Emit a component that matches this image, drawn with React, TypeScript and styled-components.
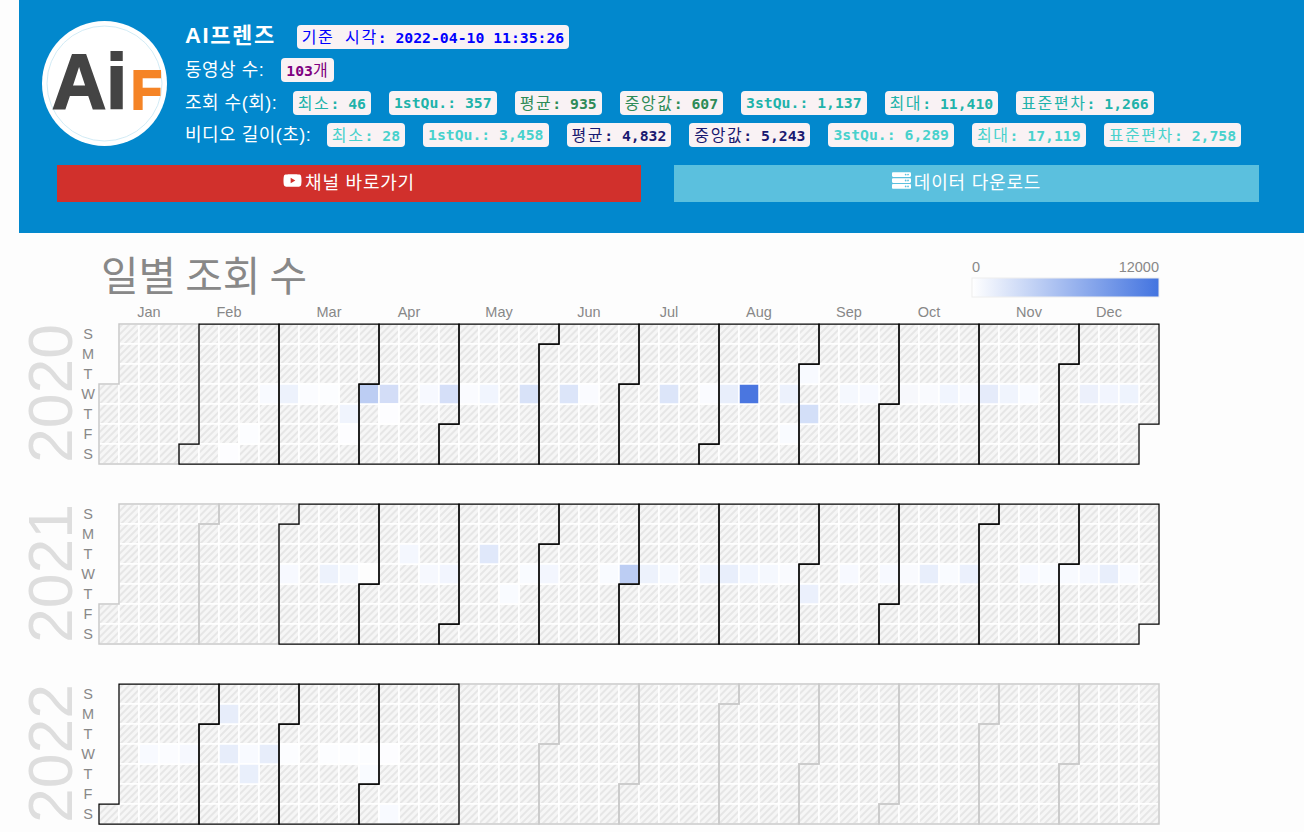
import React from 'react'
import styled, { createGlobalStyle } from 'styled-components'
import { FaYoutube, FaServer } from 'react-icons/fa'

const CELL = 20
const LEFT = 99
const YEAR_TOPS: Record<number, number> = { 2020: 324, 2021: 504, 2022: 684 }
const DAY_LABELS = ['S', 'M', 'T', 'W', 'T', 'F', 'S']
const MONTH_LABELS: [string, number][] = [
  ['Jan', 149],
  ['Feb', 229],
  ['Mar', 329],
  ['Apr', 409],
  ['May', 499],
  ['Jun', 589],
  ['Jul', 669],
  ['Aug', 759],
  ['Sep', 849],
  ['Oct', 929],
  ['Nov', 1029],
  ['Dec', 1109],
]

// months that have data get the black outline
const ACTIVE_MONTHS: Record<number, number[]> = {
  2020: [1, 2, 3, 4, 5, 6, 7, 8, 9, 10, 11],
  2021: [2, 3, 4, 5, 6, 7, 8, 9, 10, 11],
  2022: [0, 1, 2, 3],
}

// [week, weekday, colour]
const VALUES: Record<number, [number, number, string][]> = {
  2020: [
    [8, 3, '#f8faff'], [9, 3, '#edf2fc'], [10, 3, '#fbfcff'], [11, 3, '#fcfdff'], [13, 3, '#bccdf3'],
    [14, 3, '#d3ddf7'], [16, 3, '#f7f9ff'], [17, 3, '#d5dff8'], [18, 3, '#fafbff'], [19, 3, '#f1f5fe'],
    [21, 3, '#d8e2f8'], [23, 3, '#dce5f9'], [24, 3, '#fafbff'], [28, 3, '#dce5f9'], [30, 3, '#fafbff'],
    [31, 3, '#e8eefb'], [32, 3, '#4a76e0'], [34, 3, '#ecf1fc'], [37, 3, '#f5f8fe'], [38, 3, '#f7f9ff'],
    [40, 3, '#f7f8fc'], [41, 3, '#f9fafe'], [42, 3, '#f1f5fe'], [43, 3, '#f7f9ff'], [44, 3, '#e5ebfa'],
    [45, 3, '#f0f4fd'], [46, 3, '#f8faff'], [49, 3, '#ecf0fb'], [50, 3, '#f2f5fe'], [51, 3, '#eef3fd'],
    [12, 4, '#f0f4fd'], [14, 4, '#fdfdff'], [35, 4, '#d3dff8'], [35, 2, '#f8faff'],
    [7, 5, '#fcfdff'], [12, 5, '#fdfdff'], [34, 5, '#f9fbff'], [6, 6, '#fdfdff'],
  ],
  2021: [
    [9, 3, '#f7f9ff'], [11, 3, '#edf2fc'], [12, 3, '#f5f8fe'], [13, 3, '#fdfdfd'], [16, 3, '#f6f8fe'],
    [17, 3, '#f2f5fe'], [21, 3, '#f9fbff'], [22, 3, '#f3f6fe'], [25, 3, '#f9fbff'], [26, 3, '#bccdf3'],
    [27, 3, '#edf2fc'], [28, 3, '#f5f8fe'], [30, 3, '#f0f4fd'], [31, 3, '#e8eefb'], [32, 3, '#f1f5fe'],
    [33, 3, '#f5f8fe'], [34, 3, '#f9fafe'], [37, 3, '#f7f9ff'], [39, 3, '#f7f9ff'], [40, 3, '#f9fafe'],
    [41, 3, '#e8eefb'], [42, 3, '#f9fbff'], [43, 3, '#ebf0fc'], [46, 3, '#f7f9ff'], [47, 3, '#f9fbff'],
    [48, 3, '#f8faff'], [49, 3, '#f4f7fe'], [50, 3, '#e8eefb'], [51, 3, '#f8faff'],
    [15, 2, '#f4f7fe'], [19, 2, '#e0e8fa'], [20, 4, '#f9fbff'], [35, 4, '#ebf0fc'],
  ],
  2022: [
    [2, 3, '#f8faff'], [3, 3, '#fbfcff'], [4, 3, '#f6f8fe'], [6, 3, '#e7edfa'], [7, 3, '#f8faff'],
    [8, 3, '#e7edfa'], [9, 3, '#fcfdff'], [11, 3, '#fcfdff'], [12, 3, '#fcfdff'], [13, 3, '#fcfdff'],
    [14, 3, '#fdfdff'], [6, 1, '#e7edfa'], [7, 4, '#e9effb'], [13, 4, '#f9fbff'], [14, 6, '#f8faff'],
  ],
}

const dayPosition = (date: Date) => {
  const year = date.getFullYear()
  const firstDow = new Date(year, 0, 1).getDay()
  const dayOfYear = Math.round((Date.UTC(year, date.getMonth(), date.getDate()) - Date.UTC(year, 0, 1)) / 86400000)
  return { col: Math.floor((dayOfYear + firstDow) / 7), row: date.getDay() }
}

const monthPath = (year: number, month: number) => {
  const top = YEAR_TOPS[year]
  const first = dayPosition(new Date(year, month, 1))
  const last = dayPosition(new Date(year, month + 1, 0))
  const x = (col: number) => LEFT + col * CELL
  const y = (row: number) => top + row * CELL
  return `M${x(first.col + 1)} ${y(first.row)}H${x(first.col)}V${y(7)}H${x(last.col)}V${y(last.row + 1)}H${x(
    last.col + 1,
  )}V${y(0)}H${x(first.col + 1)}Z`
}

const yearDays = (year: number) => {
  const days: { col: number; row: number }[] = []
  for (let d = new Date(year, 0, 1); d.getFullYear() === year; d = new Date(year, d.getMonth(), d.getDate() + 1)) {
    days.push(dayPosition(d))
  }
  return days
}

const GlobalStyle = createGlobalStyle`
  html, body {
    margin: 0;
    height: 832px;
    overflow: hidden;
    background: #fdfdfd;
  }
`

const Page = styled.div`
  font-family: 'Liberation Sans', 'Noto Sans CJK KR', sans-serif;
`

const Header = styled.header`
  height: 233px;
  box-sizing: border-box;
  margin-left: 19px;
  padding: 21px 45px 0 23px;
  background: #0288cd;
  color: #fff;
`

const Top = styled.div`
  display: flex;
  gap: 18px;
`

const InfoList = styled.div`
  display: flex;
  flex-direction: column;
  gap: 9px;
  padding-top: 4px;
`

const InfoRow = styled.div`
  display: flex;
  align-items: center;
  gap: 17px;
  height: 24px;
  white-space: nowrap;

  &:last-child {
    margin-top: -1px;
  }
`

const Channel = styled.span`
  padding-bottom: 8px;
  margin-right: 4px;
  font-size: 22px;
  font-weight: bold;
  letter-spacing: 1.6px;
`

const Label = styled.span`
  padding-bottom: 4px;
  font-size: 18px;
  letter-spacing: 0.5px;
`

const Badges = styled.div`
  display: flex;
  gap: 18px;
  margin-left: -1.5px;
`

const Badge = styled.code<{ $color: string }>`
  display: block;
  height: 24px;
  line-height: 23px;
  padding: 0 5px;
  border-radius: 4px;
  background: #f9f2f4;
  color: ${(p) => p.$color};
  font-family: 'DejaVu Sans Mono', 'Noto Sans CJK KR', monospace;
  font-size: 14.75px;
  font-weight: bold;
`

const Hangul = styled.span`
  font-family: 'Noto Sans CJK KR', sans-serif;
  font-size: 16px;
  font-weight: 400;
  letter-spacing: 1.6px;
  word-spacing: 5.5px;
`

const Actions = styled.div`
  display: grid;
  grid-template-columns: 584px 585px;
  gap: 33px;
  margin: 18px 0 0 15px;
`

const ActionButton = styled.a<{ $bg: string }>`
  display: flex;
  align-items: center;
  justify-content: center;
  gap: 3px;
  height: 37px;
  padding-bottom: 6px;
  box-sizing: border-box;
  background: ${(p) => p.$bg};
  color: #fff;
  font-size: 18px;
  letter-spacing: 0.8px;

  svg {
    width: 19px;
    height: 19px;
  }
`

const LogoSvg = styled.svg`
  display: block;
  flex: none;
  width: 125px;
  height: 125px;
`

const LogoText = styled.text`
  font-family: 'Liberation Sans', sans-serif;
  font-weight: bold;
  stroke-width: 2;
`

const ChartSvg = styled.svg`
  display: block;
  width: 1304px;
  height: 599px;
`

const ChartTitle = styled.text`
  font-family: 'Noto Sans CJK KR', sans-serif;
  font-size: 40.8px;
  fill: #888;
`

const AxisText = styled.text`
  font-family: 'Liberation Sans', sans-serif;
  font-size: 14.5px;
  fill: #888;
`

const YearText = styled.text`
  font-family: 'Liberation Sans', sans-serif;
  font-size: 62.5px;
  fill: #dedede;
`

const Cell = styled.rect`
  stroke: #fff;
  stroke-width: 1.5;
`

const MonthOutline = styled.path<{ $active: boolean }>`
  fill: none;
  stroke: ${(p) => (p.$active ? '#000' : '#c9c9c9')};
  stroke-width: ${(p) => (p.$active ? 1.25 : 1.5)};
`

const LegendBar = styled.rect`
  stroke: #eee;
  stroke-width: 1;
`

const Stat = ({ color, name, value }: { color: string; name: string; value: string }) => (
  <Badge $color={color}>
    {/[A-Za-z]/.test(name) ? name : <Hangul>{name}</Hangul>}: {value}
  </Badge>
)

const Logo = () => (
  <LogoSvg viewBox="0 0 125 125">
    <circle cx="62.5" cy="62.5" r="62.5" fill="#fff" />
    <circle cx="62.5" cy="62.5" r="57.5" fill="none" stroke="#bfe3f0" strokeWidth="0.7" />
    <LogoText x="10" y="88" fontSize="77" fill="#444" stroke="#444" textLength="75" lengthAdjust="spacingAndGlyphs">
      Ai
    </LogoText>
    <LogoText x="89" y="88" fontSize="55" fill="#f58426" stroke="#f58426" textLength="31" lengthAdjust="spacingAndGlyphs">
      F
    </LogoText>
  </LogoSvg>
)

const viewStats = [
  ['#20b2aa', '최소', '46'],
  ['#20b2aa', '1stQu.', '357'],
  ['#2e8b57', '평균', '935'],
  ['#2e8b57', '중앙값', '607'],
  ['#20b2aa', '3stQu.', '1,137'],
  ['#20b2aa', '최대', '11,410'],
  ['#20b2aa', '표준편차', '1,266'],
]

const lengthStats = [
  ['#48d1cc', '최소', '28'],
  ['#48d1cc', '1stQu.', '3,458'],
  ['#191970', '평균', '4,832'],
  ['#191970', '중앙값', '5,243'],
  ['#48d1cc', '3stQu.', '6,289'],
  ['#48d1cc', '최대', '17,119'],
  ['#48d1cc', '표준편차', '2,758'],
]

const YearBlock = ({ year }: { year: number }) => {
  const top = YEAR_TOPS[year]
  const months = Array.from({ length: 12 }, (_, i) => i)
  const active = ACTIVE_MONTHS[year]

  return (
    <g>
      <YearText transform={`translate(72 ${top + 139}) rotate(-90)`}>{year}</YearText>
      {DAY_LABELS.map((day, i) => (
        <AxisText key={i} x={88} y={top + i * CELL + 15} textAnchor="middle">
          {day}
        </AxisText>
      ))}
      {yearDays(year).map(({ col, row }) => (
        <Cell
          key={`${col}-${row}`}
          x={LEFT + col * CELL}
          y={top + row * CELL}
          width={CELL}
          height={CELL}
          fill="url(#noData)"
        />
      ))}
      {VALUES[year].map(([col, row, color]) => (
        <Cell
          key={`v-${col}-${row}`}
          x={LEFT + col * CELL}
          y={top + row * CELL}
          width={CELL}
          height={CELL}
          fill={color}
        />
      ))}
      {months
        .filter((m) => !active.includes(m))
        .map((m) => (
          <MonthOutline key={m} $active={false} d={monthPath(year, m)} />
        ))}
      {active.map((m) => (
        <MonthOutline key={m} $active d={monthPath(year, m)} />
      ))}
    </g>
  )
}

const Chart = () => (
  <ChartSvg viewBox="0 233 1304 599">
    <defs>
      <pattern id="noData" width="5" height="5" patternUnits="userSpaceOnUse" patternTransform="rotate(45)">
        <rect width="5" height="5" fill="#f6f6f6" />
        <rect width="2" height="5" fill="#e6e6e6" />
      </pattern>
      <linearGradient id="legendRamp">
        <stop offset="0" stopColor="#fff" />
        <stop offset="1" stopColor="#4374e0" />
      </linearGradient>
    </defs>
    <ChartTitle x="101" y="291">
      일별 조회 수
    </ChartTitle>
    <AxisText x="972" y="272">
      0
    </AxisText>
    <AxisText x="1159" y="272" textAnchor="end">
      12000
    </AxisText>
    <LegendBar x="972" y="278" width="187" height="19" fill="url(#legendRamp)" />
    {MONTH_LABELS.map(([name, x]) => (
      <AxisText key={name} x={x} y={317} textAnchor="middle">
        {name}
      </AxisText>
    ))}
    <YearBlock year={2020} />
    <YearBlock year={2021} />
    <YearBlock year={2022} />
  </ChartSvg>
)

export default function App() {
  return (
    <Page>
      <GlobalStyle />
      <Header>
        <Top>
          <Logo />
          <InfoList>
            <InfoRow>
              <Channel>AI프렌즈</Channel>
              <Badge $color="#0000ff">
                <Hangul>기준 시각</Hangul>: 2022-04-10 11:35:26
              </Badge>
            </InfoRow>
            <InfoRow>
              <Label>동영상 수:</Label>
              <Badge $color="#800080">
                103<Hangul>개</Hangul>
              </Badge>
            </InfoRow>
            <InfoRow>
              <Label>조회 수(회):</Label>
              <Badges>
                {viewStats.map(([color, name, value]) => (
                  <Stat key={name} color={color} name={name} value={value} />
                ))}
              </Badges>
            </InfoRow>
            <InfoRow>
              <Label>비디오 길이(초):</Label>
              <Badges>
                {lengthStats.map(([color, name, value]) => (
                  <Stat key={name} color={color} name={name} value={value} />
                ))}
              </Badges>
            </InfoRow>
          </InfoList>
        </Top>
        <Actions>
          <ActionButton $bg="#d1302c">
            <FaYoutube />
            채널 바로가기
          </ActionButton>
          <ActionButton $bg="#5bc0de">
            <FaServer />
            데이터 다운로드
          </ActionButton>
        </Actions>
      </Header>
      <Chart />
    </Page>
  )
}
